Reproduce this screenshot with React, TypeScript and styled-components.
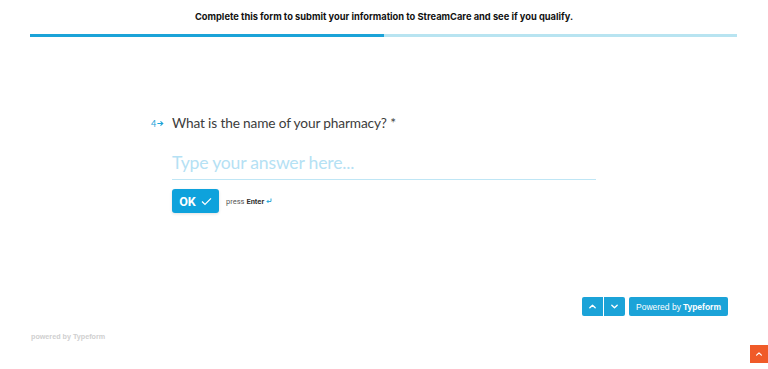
import React from 'react';
import styled, { createGlobalStyle } from 'styled-components';

const GlobalStyle = createGlobalStyle`
  html, body {
    margin: 0;
    padding: 0;
    background: #ffffff;
  }
  * {
    box-sizing: border-box;
  }
`;

const Page = styled.div`
  position: relative;
  width: 768px;
  height: 369px;
  overflow: hidden;
  display: flex;
  flex-direction: column;
  font-family: 'Lato', 'Liberation Sans', sans-serif;
`;

const Header = styled.div`
  height: 33px;
  display: flex;
  align-items: center;
  justify-content: center;
  font-family: 'Inter', 'Liberation Sans', sans-serif;
  font-weight: 700;
  font-size: 9.3px;
  color: #111111;
`;

const Progress = styled.div`
  margin: 1px 31px 0 30px;
  height: 3px;
  background: #b8e4f1;
  display: flex;
`;

const ProgressFill = styled.div`
  height: 100%;
  background: #1ba3d8;
`;

const Main = styled.main`
  flex: 1;
  padding: 76px 0 0 151px;
`;

const QuestionRow = styled.div`
  display: flex;
  align-items: center;
  gap: 4px;
`;

const Number = styled.span`
  width: 17px;
  display: flex;
  align-items: center;
  gap: 1px;
  font-size: 9px;
  color: #1ba3d8;
`;

const Question = styled.h1`
  margin: 0;
  font-family: 'Lato', 'Liberation Sans', sans-serif;
  font-weight: 400;
  font-size: 13.7px;
  letter-spacing: -0.15px;
  line-height: 20px;
  color: #3c3c3c;
`;

const Answer = styled.div`
  margin: 17px 0 0 21px;
  width: 424px;
  border-bottom: 1px solid #bfe6f5;
  padding-bottom: 3px;
  font-size: 17.6px;
  letter-spacing: -0.2px;
  line-height: 26px;
  color: #b5e1f4;
`;

const Actions = styled.div`
  margin: 9px 0 0 21px;
  display: flex;
  align-items: center;
  gap: 7px;
`;

const OkButton = styled.button`
  width: 47px;
  height: 24px;
  border: none;
  border-radius: 3px;
  background: #0ea2dc;
  color: #ffffff;
  font-family: 'Roboto', 'Liberation Sans', sans-serif;
  font-weight: 700;
  font-size: 12.5px;
  display: flex;
  align-items: center;
  justify-content: center;
  gap: 5px;
  padding: 0;
  box-shadow: 0 1px 3px rgba(0, 0, 0, 0.12);
`;

const Hint = styled.span`
  font-family: 'Roboto', 'Liberation Sans', sans-serif;
  font-size: 7.5px;
  color: #555555;
  display: flex;
  align-items: center;
  gap: 2px;

  b {
    font-weight: 700;
    color: #333333;
  }
`;

const Footer = styled.div`
  display: flex;
  justify-content: flex-end;
  gap: 4px;
  padding: 0 40px 0 0;
  height: 19px;
  margin-bottom: 16px;
`;

const NavGroup = styled.div`
  display: flex;
  gap: 1px;
  border-radius: 2px;
  overflow: hidden;
`;

const NavButton = styled.button`
  width: 21px;
  height: 19px;
  border: none;
  padding: 0;
  background: #1ba3d8;
  display: flex;
  align-items: center;
  justify-content: center;
`;

const Powered = styled.div`
  width: 99px;
  height: 19px;
  border-radius: 2px;
  background: #1ba3d8;
  color: #ffffff;
  font-family: 'Liberation Sans', sans-serif;
  font-size: 8.5px;
  display: flex;
  align-items: center;
  justify-content: center;
  gap: 2px;

  b {
    font-weight: 700;
  }
`;

const SmallCredit = styled.div`
  padding: 0 0 28px 31px;
  font-family: 'Liberation Sans', sans-serif;
  font-size: 7.2px;
  font-weight: 700;
  color: #cfcfcf;
`;

const ScrollTop = styled.div`
  position: absolute;
  right: 0;
  bottom: 6px;
  width: 18px;
  height: 18px;
  background: #f05a28;
  display: flex;
  align-items: center;
  justify-content: center;
`;

const Chevron = ({ up, size = 9, color = '#ffffff' }: { up: boolean; size?: number; color?: string }) => (
  <svg width={size} height={size} viewBox="0 0 10 10">
    <path
      d={up ? 'M2 6.5 L5 3.5 L8 6.5' : 'M2 3.5 L5 6.5 L8 3.5'}
      fill="none"
      stroke={color}
      strokeWidth="1.5"
      strokeLinecap="round"
      strokeLinejoin="round"
    />
  </svg>
);

const progress = 50;

export default function App() {
  return (
    <Page>
      <GlobalStyle />
      <Header>Complete this form to submit your information to StreamCare and see if you qualify.</Header>
      <Progress>
        <ProgressFill style={{ width: `${progress}%` }} />
      </Progress>
      <Main>
        <QuestionRow>
          <Number>
            4
            <svg width="7" height="7" viewBox="0 0 8 8">
              <path d="M0.5 4 H6.5 M4 1.5 L6.7 4 L4 6.5" fill="none" stroke="#1ba3d8" strokeWidth="1.2" />
            </svg>
          </Number>
          <Question>What is the name of your pharmacy? *</Question>
        </QuestionRow>
        <Answer>Type your answer here...</Answer>
        <Actions>
          <OkButton>
            OK
            <svg width="11" height="9" viewBox="0 0 11 9">
              <path d="M1 4.6 L4 7.4 L10 1.4" fill="none" stroke="#ffffff" strokeWidth="1.3" />
            </svg>
          </OkButton>
          <Hint>
            press <b>Enter</b>
            <svg width="6" height="6" viewBox="0 0 6 6">
              <path d="M5 0.5 V3.5 H1 M2.5 2 L1 3.5 L2.5 5" fill="none" stroke="#1ba3d8" strokeWidth="0.9" />
            </svg>
          </Hint>
        </Actions>
      </Main>
      <Footer>
        <NavGroup>
          <NavButton>
            <Chevron up />
          </NavButton>
          <NavButton>
            <Chevron up={false} />
          </NavButton>
        </NavGroup>
        <Powered>
          Powered by <b>Typeform</b>
        </Powered>
      </Footer>
      <SmallCredit>powered by Typeform</SmallCredit>
      <ScrollTop>
        <Chevron up size={8} />
      </ScrollTop>
    </Page>
  );
}
